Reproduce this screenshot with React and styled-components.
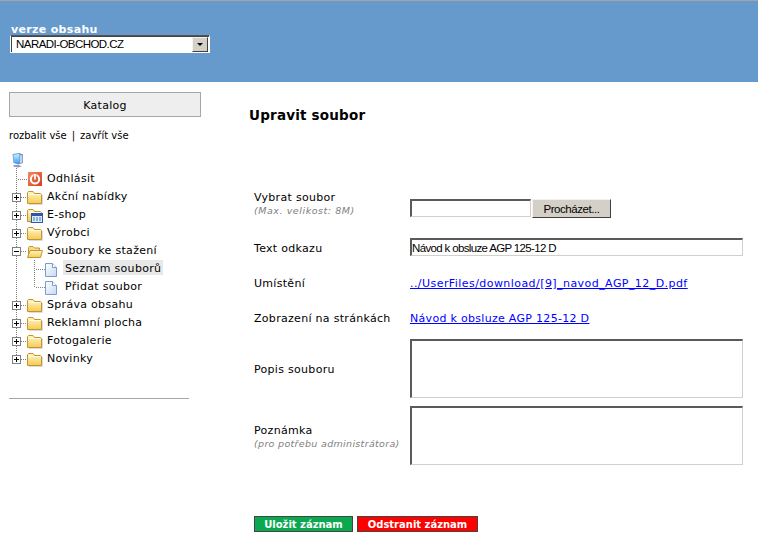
import React from "react";
import styled, { createGlobalStyle } from "styled-components";

const GlobalStyle = createGlobalStyle`
  html, body {
    margin: 0;
    padding: 0;
    background: #fff;
    font-family: "DejaVu Sans", Verdana, sans-serif;
    font-size: 11px;
    color: #000;
  }
`;

const Page = styled.div`
  width: 758px;
  height: 552px;
  overflow: hidden;
  display: flex;
  flex-direction: column;
`;

const Header = styled.header`
  height: 82px;
  flex: none;
  box-sizing: border-box;
  background: #6699cc;
  border-top: 1px solid #a8a49c;
  padding: 22px 0 0 10px;
`;

const VersionLabel = styled.div`
  color: #fff;
  font-weight: bold;
  font-size: 11px;
  line-height: 13px;
  letter-spacing: 0.33px;
  padding-left: 1px;
  margin-bottom: -1px;
`;

const SelectBox = styled.div`
  position: relative;
  width: 200px;
  height: 18px;
  box-sizing: border-box;
  background: #fff;
  border: 1px solid #fff;
  border-top-color: #555;
  box-shadow: inset 1px 1px 0 #444;
  display: flex;
  align-items: center;
`;

const SelectField = styled.select`
  appearance: none;
  border: 0;
  background: transparent;
  width: 100%;
  padding: 0 0 0 5px;
  font-family: "Liberation Sans", Arial, sans-serif;
  font-size: 11.5px;
  letter-spacing: -0.55px;
  color: #000;
  outline: none;
`;

const SelectArrow = styled.span`
  position: absolute;
  right: 1px;
  top: 1px;
  width: 16px;
  height: 15px;
  box-sizing: border-box;
  background: #d4d0c8;
  border: 1px solid;
  border-color: #f4f2ee #404040 #404040 #f4f2ee;
  display: flex;
  align-items: center;
  justify-content: center;
  &::after {
    content: "";
    border-style: solid;
    border-width: 3px 3px 0 3px;
    border-color: #000 transparent transparent transparent;
  }
`;

const Body = styled.div`
  flex: 1;
  display: flex;
`;

const Sidebar = styled.aside`
  width: 249px;
  flex: none;
  box-sizing: border-box;
  padding: 10px 0 0 9px;
`;

const CatalogTitle = styled.div`
  width: 192px;
  height: 25px;
  box-sizing: border-box;
  background: #eeeeee;
  border: 1px solid #a6a6a6;
  text-align: center;
  line-height: 25px;
  letter-spacing: 0.3px;
`;

const TreeControls = styled.div`
  margin-top: 12px;
  height: 13px;
  font-size: 10px;
  line-height: 13px;
  a {
    color: #000;
    text-decoration: none;
  }
  span {
    margin: 0 5px;
  }
`;

const Tree = styled.div`
  margin-top: 10px;
`;

const RootRow = styled.div`
  height: 18px;
  padding-left: 3px;
`;

const TreeRow = styled.div`
  display: flex;
  align-items: center;
  height: 18px;
`;

const Cell = styled.svg`
  display: block;
  flex: none;
  width: 18px;
  height: 18px;
`;

const NodeLabel = styled.span`
  align-self: flex-start;
  box-sizing: border-box;
  height: 15px;
  margin-left: 2px;
  padding: 2px 2px 0;
  line-height: 14px;
  letter-spacing: 0.3px;
  white-space: nowrap;
  background: ${(p) => (p.$active ? "#e8e8e8" : "transparent")};
`;

const Divider = styled.hr`
  width: 180px;
  margin: 30px 0 0;
  border: 0;
  border-top: 1px solid #a6a6a6;
`;

const Main = styled.main`
  flex: 1;
  padding-right: 15px;
`;

const Title = styled.h1`
  margin: 25px 0 0;
  font-size: 13.5px;
  line-height: 16px;
  font-weight: bold;
  letter-spacing: 0.2px;
`;

const Form = styled.form`
  margin: 68px 0 0 5px;
  display: flex;
  flex-direction: column;
`;

const FormRow = styled.div`
  display: grid;
  grid-template-columns: 156px 333px;
  align-items: center;
  height: ${(p) => p.$h}px;
  margin-bottom: ${(p) => p.$gap || 0}px;
`;

const Label = styled.div`
  line-height: 13px;
  letter-spacing: 0.3px;
  padding-top: ${(p) => p.$drop || 0}px;
`;

const Hint = styled.div`
  font-size: 9.5px;
  line-height: 13px;
  font-style: italic;
  color: #808080;
  letter-spacing: ${(p) => p.$spacing}px;
`;

const FileRow = styled.div`
  align-self: end;
  height: 18px;
  display: flex;
  align-items: flex-start;
  gap: 1px;
`;

const insetBorder = `
  box-sizing: border-box;
  border-style: solid;
  border-width: 2px 1px 1px 2px;
  border-color: #5a5a5a #d4d0c8 #d4d0c8 #5a5a5a;
  background: #fff;
  outline: none;
  border-radius: 0;
  margin: 0;
`;

const TextInput = styled.input`
  ${insetBorder}
  display: block;
  width: ${(p) => p.$w}px;
  height: 18px;
  padding: 0 0 0 0;
  font-family: "Liberation Sans", Arial, sans-serif;
  font-size: 11.5px;
  letter-spacing: -0.65px;
  color: #000;
`;

const BrowseButton = styled.button`
  flex: none;
  width: 79px;
  height: 19px;
  padding: 0;
  box-sizing: border-box;
  background: #d4d0c8;
  border: 1px solid;
  border-color: #f4f2ee #404040 #404040 #f4f2ee;
  font-family: "Liberation Sans", Arial, sans-serif;
  font-size: 11.5px;
  letter-spacing: -0.45px;
  color: #000;
`;

const TextArea = styled.textarea`
  ${insetBorder}
  display: block;
  width: 333px;
  height: 59px;
  resize: none;
`;

const LinkText = styled.a`
  color: #0000ff;
  text-decoration: underline;
  letter-spacing: ${(p) => p.$spacing}px;
  white-space: nowrap;
`;

const Actions = styled.div`
  display: flex;
  gap: 4px;
  margin-top: 51px;
`;

const ActionButton = styled.button`
  height: 16px;
  width: ${(p) => p.$w}px;
  box-sizing: border-box;
  padding: 0;
  border: 1px solid #444;
  background: ${(p) => p.$bg};
  color: #fff;
  font-family: "DejaVu Sans", Verdana, sans-serif;
  font-size: 10px;
  font-weight: bold;
  line-height: 13px;
`;

const Dots = ({ d }) => (
  <path d={d} fill="none" stroke="#808080" strokeWidth="1" strokeDasharray="1 1" shapeRendering="crispEdges" />
);

// connector: through = line goes on down, otherwise it stops at the branch
const Join = ({ through = true }) => (
  <Cell viewBox="0 0 18 18">
    <Dots d={through ? "M7.5 0V18" : "M7.5 0V9"} />
    <Dots d="M9 9.5H18" />
  </Cell>
);

const Stem = () => (
  <Cell viewBox="0 0 18 18">
    <Dots d="M7.5 0V18" />
  </Cell>
);

const Toggle = ({ open, through = true }) => (
  <Cell viewBox="0 0 18 18">
    <Dots d={through ? "M7.5 0V5M7.5 14V18" : "M7.5 0V5"} />
    <Dots d="M12 9.5H18" />
    <rect x="3.5" y="5.5" width="8" height="8" fill="#fff" stroke="#808080" shapeRendering="crispEdges" />
    <path d={open ? "M5 9.5H10" : "M5 9.5H10M7.5 7V12"} stroke="#000" fill="none" shapeRendering="crispEdges" />
  </Cell>
);

const Computer = () => (
  <svg width="12" height="18" viewBox="0 0 12 18" style={{ display: "block" }}>
    <defs>
      <linearGradient id="screen" x1="0" y1="0" x2="0" y2="1">
        <stop offset="0" stopColor="#c4f0ff" />
        <stop offset="1" stopColor="#48a8f4" />
      </linearGradient>
    </defs>
    <path d="M0.5 2L7.5 1L11 2.5V11L6.5 12.5L1.5 11Z" fill="#6a92dc" />
    <path d="M1.3 2.8L7.3 2V10.3L2 10.8Z" fill="url(#screen)" />
    <path d="M8 3L10.3 3.5V10.5L8 11.3Z" fill="#c8d2e6" />
    <path d="M1.5 13L6.5 13L10 14.2L6 15.5L1.5 14.5Z" fill="#8d9ab8" />
    <Dots d="M4.5 16V18" />
  </svg>
);

const Logout = () => (
  <svg width="16" height="16" viewBox="0 0 16 16">
    <defs>
      <linearGradient id="logoutFill" x1="0" y1="0" x2="1" y2="1">
        <stop offset="0" stopColor="#f58a5c" />
        <stop offset="1" stopColor="#d2401e" />
      </linearGradient>
    </defs>
    <rect x="1" y="1" width="14" height="14" fill="url(#logoutFill)" />
    <circle cx="8" cy="8.3" r="4.2" fill="none" stroke="#fff" strokeWidth="2" />
    <path d="M8 4V8.5" stroke="#e0583a" strokeWidth="3" />
    <path d="M8 3.5V8.5" stroke="#fff" strokeWidth="1.8" />
  </svg>
);

const FolderFill = () => (
  <defs>
    <linearGradient id="folderFill" x1="0" y1="0" x2="0" y2="1">
      <stop offset="0" stopColor="#fff6c4" />
      <stop offset="1" stopColor="#f6cb55" />
    </linearGradient>
  </defs>
);

const Folder = ({ shop }) => (
  <svg width="16" height="16" viewBox="0 0 16 16">
    <FolderFill />
    <path d="M0.5 14.5V3.5L1.5 2.5H6L7.5 4.5H13.5L14.5 5.5V14.5Z" fill="url(#folderFill)" stroke="#c2952e" strokeLinejoin="round" />
    <path d="M1.5 5.5H13.5" stroke="#fffbe0" />
    <path d="M15.5 6V15.5H2" fill="none" stroke="#dcdcdc" />
    {shop && (
      <g>
        <rect x="4.5" y="6.5" width="11" height="9" fill="#dfeafa" stroke="#2a59a8" />
        <rect x="5" y="7" width="10" height="2" fill="#2a59a8" />
        <path d="M6 11H8M9 11H11M12 11H14M6 13H8M9 13H11M12 13H14" stroke="#3a78d0" />
      </g>
    )}
  </svg>
);

const OpenFolder = () => (
  <svg width="16" height="16" viewBox="0 0 16 16">
    <FolderFill />
    <path d="M1.5 14V4.5L2.5 3.5H6L7.5 5H12.5V7" fill="#f9dc7e" stroke="#c2952e" strokeLinejoin="round" />
    <path d="M0.5 14.5L3 7.5H15.5L13.5 14.5Z" fill="url(#folderFill)" stroke="#c2952e" strokeLinejoin="round" />
  </svg>
);

const Doc = () => (
  <svg width="16" height="16" viewBox="0 0 16 16">
    <defs>
      <linearGradient id="docFill" x1="0" y1="0" x2="1" y2="1">
        <stop offset="0" stopColor="#ffffff" />
        <stop offset="1" stopColor="#c4d8f6" />
      </linearGradient>
    </defs>
    <path d="M0.5 2.5H7.5L11.5 6.5V15.5H0.5Z" fill="url(#docFill)" stroke="#7f9bc8" />
    <path d="M7.5 2.5V6.5H11.5" fill="#fff" stroke="#7f9bc8" />
  </svg>
);

const topNodes = [
  { label: "Akční nabídky" },
  { label: "E-shop", shop: true },
  { label: "Výrobci" },
];

const bottomNodes = ["Správa obsahu", "Reklamní plocha", "Fotogalerie", "Novinky"];

function App() {
  return (
    <Page>
      <GlobalStyle />
      <Header>
        <VersionLabel>verze obsahu</VersionLabel>
        <SelectBox>
          <SelectField defaultValue="NARADI-OBCHOD.CZ">
            <option>NARADI-OBCHOD.CZ</option>
          </SelectField>
          <SelectArrow />
        </SelectBox>
      </Header>
      <Body>
        <Sidebar>
          <CatalogTitle>Katalog</CatalogTitle>
          <TreeControls>
            <a href="#">rozbalit vše</a>
            <span>|</span>
            <a href="#">zavřít vše</a>
          </TreeControls>
          <Tree>
            <RootRow>
              <Computer />
            </RootRow>
            <TreeRow>
              <Join />
              <Logout />
              <NodeLabel>Odhlásit</NodeLabel>
            </TreeRow>
            {topNodes.map((n) => (
              <TreeRow key={n.label}>
                <Toggle />
                <Folder shop={n.shop} />
                <NodeLabel>{n.label}</NodeLabel>
              </TreeRow>
            ))}
            <TreeRow>
              <Toggle open />
              <OpenFolder />
              <NodeLabel>Soubory ke stažení</NodeLabel>
            </TreeRow>
            <TreeRow>
              <Stem />
              <Join />
              <Doc />
              <NodeLabel $active>Seznam souborů</NodeLabel>
            </TreeRow>
            <TreeRow>
              <Stem />
              <Join through={false} />
              <Doc />
              <NodeLabel>Přidat soubor</NodeLabel>
            </TreeRow>
            {bottomNodes.map((label, i) => (
              <TreeRow key={label}>
                <Toggle through={i < bottomNodes.length - 1} />
                <Folder />
                <NodeLabel>{label}</NodeLabel>
              </TreeRow>
            ))}
          </Tree>
          <Divider />
        </Sidebar>
        <Main>
          <Title>Upravit soubor</Title>
          <Form onSubmit={(e) => e.preventDefault()}>
            <FormRow $h={26} $gap={21}>
              <div>
                <Label>Vybrat soubor</Label>
                <Hint $spacing={0.55}>(Max. velikost: 8M)</Hint>
              </div>
              <FileRow>
                <TextInput $w={121} />
                <BrowseButton type="button">Procházet...</BrowseButton>
              </FileRow>
            </FormRow>
            <FormRow $h={18} $gap={18}>
              <Label $drop={2}>Text odkazu</Label>
              <TextInput $w={333} defaultValue="Návod k obsluze AGP 125-12 D" />
            </FormRow>
            <FormRow $h={18} $gap={17}>
              <Label>Umístění</Label>
              <LinkText href="#" $spacing={0.44}>../UserFiles/download/[9]_navod_AGP_12_D.pdf</LinkText>
            </FormRow>
            <FormRow $h={18} $gap={12}>
              <Label>Zobrazení na stránkách</Label>
              <LinkText href="#" $spacing={0.3}>Návod k obsluze AGP 125-12 D</LinkText>
            </FormRow>
            <FormRow $h={59} $gap={8}>
              <Label $drop={2}>Popis souboru</Label>
              <TextArea />
            </FormRow>
            <FormRow $h={59}>
              <div>
                <Label $drop={2}>Poznámka</Label>
                <Hint $spacing={0.32}>(pro potřebu administrátora)</Hint>
              </div>
              <TextArea />
            </FormRow>
            <Actions>
              <ActionButton type="button" $w={99} $bg="#0aa84f">Uložit záznam</ActionButton>
              <ActionButton type="button" $w={121} $bg="#ff0000">Odstranit záznam</ActionButton>
            </Actions>
          </Form>
        </Main>
      </Body>
    </Page>
  );
}

export default App;
